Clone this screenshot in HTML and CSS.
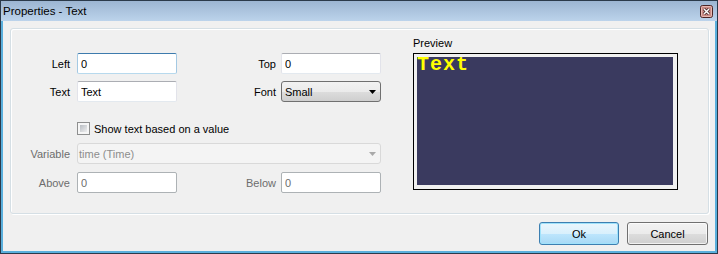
FILE: index.html
```html
<!DOCTYPE html>
<html lang="en">
<head>
    <meta charset="UTF-8">
    <meta name="viewport" content="width=device-width, initial-scale=1.0">
    <title>Properties - Text</title>
    <link rel="stylesheet" href="styles.css">
</head>
<body>
    <div class="window">
        <div class="titlebar">
            <span class="title">Properties - Text</span>
            <span class="close">
                <svg width="13" height="13" viewBox="0 0 13 13">
                    <rect x="0.5" y="0.5" width="12" height="12" rx="2" fill="#c98a84" stroke="#4b2424"/>
                    <rect x="1.5" y="1.5" width="10" height="10" rx="1" fill="none" stroke="#e7b8b2"/>
                    <path d="M4 4 L9 9 M9 4 L4 9" stroke="#3a1c1c" stroke-width="3"/>
                    <path d="M4 4 L9 9 M9 4 L4 9" stroke="#ffffff" stroke-width="1.5"/>
                </svg>
            </span>
        </div>
        <div class="client">
            <div class="panel">
                <div class="form">
                    <div class="row row-first">
                        <label class="label">Left</label>
                        <input class="field focused" type="text" value="0">
                        <label class="label label-right">Top</label>
                        <input class="field" type="text" value="0">
                    </div>
                    <div class="row">
                        <label class="label">Text</label>
                        <input class="field" type="text" value="Text">
                        <label class="label label-right">Font</label>
                        <div class="combo">
                            <span>Small</span>
                            <svg class="arrow" width="7" height="4" viewBox="0 0 7 4"><path d="M0 0 H7 L3.5 4 Z" fill="#000"/></svg>
                        </div>
                    </div>
                    <div class="row row-check">
                        <label class="check"><span class="box"></span>Show text based on a value</label>
                    </div>
                    <div class="row row-tight disabled">
                        <label class="label">Variable</label>
                        <div class="combo combo-wide">
                            <span>time (Time)</span>
                            <svg class="arrow" width="7" height="4" viewBox="0 0 7 4"><path d="M0 0 H7 L3.5 4 Z" fill="#a9a9a9"/></svg>
                        </div>
                    </div>
                    <div class="row row-tight disabled">
                        <label class="label">Above</label>
                        <input class="field" type="text" value="0" disabled>
                        <label class="label label-right">Below</label>
                        <input class="field" type="text" value="0" disabled>
                    </div>
                </div>
                <div class="preview">
                    <div class="preview-label">Preview</div>
                    <div class="screen">
                        <div class="lcd">Text</div>
                    </div>
                </div>
            </div>
            <div class="actions">
                <button class="btn btn-default">Ok</button>
                <button class="btn btn-cancel">Cancel</button>
            </div>
        </div>
    </div>
</body>
</html>
```

FILE: styles.css
```css
body {
    margin: 0;
    background: #f0f0f0;
}

.window {
    width: 718px;
    height: 254px;
    box-sizing: border-box;
    border: 1px solid #2b3a4a;
    display: flex;
    flex-direction: column;
    font-family: "Liberation Sans", Arial, sans-serif;
    font-size: 11px;
    color: #000;
}

.titlebar {
    height: 20px;
    flex: none;
    display: flex;
    align-items: center;
    justify-content: space-between;
    padding: 0 4px 0 2px;
    background: linear-gradient(#9cb5d2, #bcd3eb);
}

.title {
    font-size: 11.5px;
}

.close {
    width: 13px;
    height: 13px;
    display: block;
}
.close svg {
    display: block;
}

.client {
    flex: 1;
    border: 2px solid #5aafdc;
    border-top: none;
    padding: 7px 6px 0 7px;
    background: #f0f0f0;
}

.panel {
    height: 186px;
    box-sizing: border-box;
    border: 1px solid #d5dfe5;
    border-radius: 3px;
    box-shadow: inset 1px 1px #fff, 1px 1px #fff;
    display: flex;
}

.form {
    width: 370px;
    padding-top: 24px;
    margin-right: 32px;
}

.row {
    display: grid;
    grid-template-columns: 66px 100px 104px 100px;
    height: 21px;
    align-items: center;
    margin-top: 7px;
}
.row-first {
    margin-top: 0;
}
.row-check {
    height: 13px;
    margin-top: 20px;
}
.row-tight {
    margin-top: 8px;
}

.label {
    text-align: right;
    padding-right: 7px;
}
.label-right {
    padding-right: 5px;
}
.disabled .label {
    color: #6d6d6d;
}

.field {
    width: 100px;
    height: 21px;
    box-sizing: border-box;
    margin: 0;
    padding: 0 3px;
    border: 1px solid;
    border-color: #abadb3 #e2e3ea #e3e9ef;
    border-radius: 2px;
    background: #fff;
    font: inherit;
    color: #000;
    outline: none;
}
.field.focused {
    border-color: #3d7bad #a4c9e3 #b7d9ed;
}
.field:disabled {
    border-color: #adb2b5;
    color: #6d6d6d;
    background: #fff;
}

.combo {
    height: 21px;
    box-sizing: border-box;
    display: flex;
    align-items: center;
    justify-content: space-between;
    padding: 0 4px 0 3px;
    border: 1px solid #707070;
    border-radius: 3px;
    background: linear-gradient(#f2f2f2 0%, #ebebeb 50%, #dddddd 50%, #cfcfcf 100%);
}
.combo-wide {
    grid-column: 2 / 5;
    padding-left: 1px;
    border-color: #d9d9d9;
    background: #f4f4f4;
    color: #8d8d8d;
}
.arrow {
    display: block;
}

.check {
    grid-column: 2 / 5;
    display: flex;
    align-items: center;
    gap: 4px;
}
.box {
    width: 13px;
    height: 13px;
    box-sizing: border-box;
    border: 1px solid #8e8f8f;
    padding: 2px;
    background: linear-gradient(135deg, #b9bdc3, #eeeeef) content-box, #f6f6f6;
}

.preview {
    padding-top: 8px;
}
.preview-label {
    height: 13px;
    line-height: 13px;
    margin-bottom: 3px;
}
.screen {
    width: 265px;
    height: 137px;
    box-sizing: border-box;
    border: 1px solid #000;
    padding: 3px 4px 4px 3px;
}
.lcd {
    height: 100%;
    background: #3a3a5f;
    color: #ffff00;
    font-family: "Liberation Mono", monospace;
    font-weight: bold;
    font-size: 20px;
    line-height: 16px;
    letter-spacing: 1px;
}

.actions {
    display: flex;
    justify-content: flex-end;
    gap: 8px;
    margin-top: 8px;
    padding-right: 1px;
}
.btn {
    width: 80px;
    height: 23px;
    margin: 0;
    padding: 0;
    border: 1px solid #707070;
    border-radius: 3px;
    font: inherit;
    color: #000;
    background: linear-gradient(#f2f2f2 0%, #ebebeb 50%, #dddddd 50%, #cfcfcf 100%);
    box-shadow: inset 0 0 0 1px rgba(255, 255, 255, 0.7);
}
.btn-cancel {
    width: 81px;
}
.btn-default {
    border-color: #3c7fb1;
    background: linear-gradient(#eaf6fd 0%, #d9f0fc 50%, #bee6fd 50%, #a7d9f5 100%);
    box-shadow: inset 0 0 0 1px #9fe2fb;
}
```
